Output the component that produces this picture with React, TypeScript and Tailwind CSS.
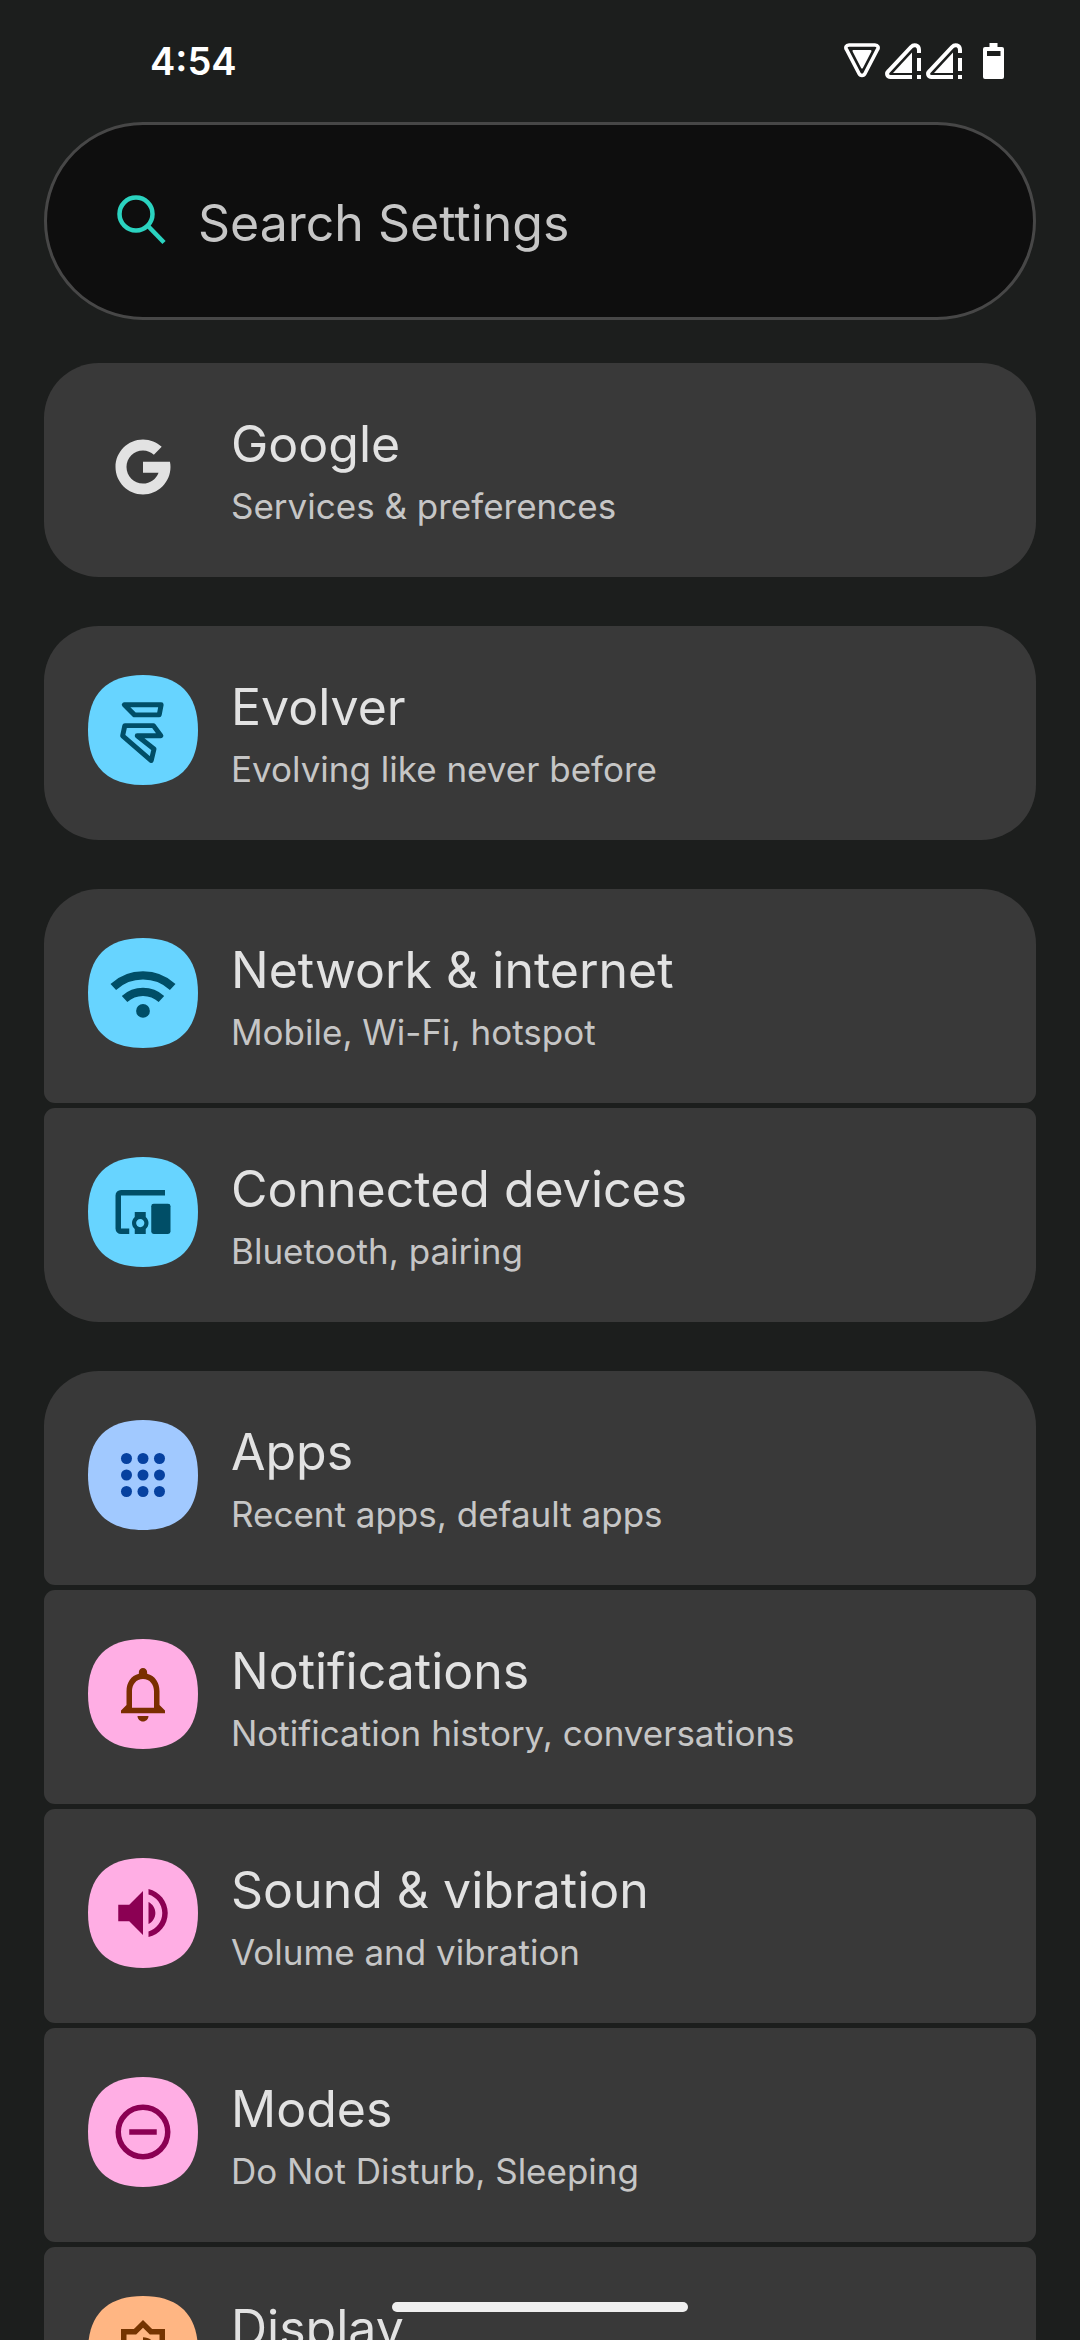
import React from "react";

interface SettingItem {
  title: string;
  summary?: string;
  tile?: string;
  color: string;
  icon: React.ReactNode;
}

const groups: SettingItem[][] = [
  [
    {
      title: "Google",
      summary: "Services & preferences",
      color: "text-[#e2e2e2]",
      icon: (
        <path
          transform="scale(0.5)"
          d="M43.6 20.1H24v8h11.3C33.7 32.7 29.2 36 24 36c-6.6 0-12-5.4-12-12s5.4-12 12-12c3.1 0 5.8 1.2 7.9 3l5.7-5.7C34 6.1 29.3 4 24 4 13 4 4 13 4 24s9 20 20 20 20-9 20-20c0-1.3-.1-2.6-.4-3.9z"
        />
      ),
    },
  ],
  [
    {
      title: "Evolver",
      summary: "Evolving like never before",
      tile: "fill-[#67d4ff]",
      color: "text-[#004e67]",
      icon: (
        <g fill="none" stroke="currentColor" strokeWidth="1.8" strokeLinejoin="round">
          <path d="M5.2 2.8H18.6L17.9 6.5H8.9Z" />
          <path d="M5.4 10.4H15.8L18.5 14.1H9.9L16 18.9L15 23.1L4.6 14.1Z" />
        </g>
      ),
    },
  ],
  [
    {
      title: "Network & internet",
      summary: "Mobile, Wi-Fi, hotspot",
      tile: "fill-[#67d4ff]",
      color: "text-[#004e67]",
      icon: (
        <>
          <g fill="none" stroke="currentColor" strokeWidth="3">
            <path d="M1.2 9.8a16 16 0 0 1 21.6 0" />
            <path d="M5.3 14.2a10 10 0 0 1 13.4 0" />
          </g>
          <circle cx="12" cy="18.5" r="2.5" />
        </>
      ),
    },
    {
      title: "Connected devices",
      summary: "Bluetooth, pairing",
      tile: "fill-[#67d4ff]",
      color: "text-[#004e67]",
      icon: (
        <>
          <path
            d="M20 5H4a1 1 0 0 0-1 1v12a1 1 0 0 0 1 1h3"
            fill="none"
            stroke="currentColor"
            strokeWidth="2"
          />
          <path d="M13 12H9v1.78c-.61.55-1 1.33-1 2.22s.39 1.67 1 2.22V20h4v-1.78c.61-.55 1-1.34 1-2.22s-.39-1.67-1-2.22V12zm-2 5.5c-.83 0-1.5-.67-1.5-1.5s.67-1.5 1.5-1.5 1.5.67 1.5 1.5-.67 1.5-1.5 1.5z" />
          <rect x="15" y="9" width="7" height="11" rx="0.9" />
        </>
      ),
    },
  ],
  [
    {
      title: "Apps",
      summary: "Recent apps, default apps",
      tile: "fill-[#a1c9ff]",
      color: "text-[#0641a0]",
      icon: [6, 12, 18].map((cy) =>
        [6, 12, 18].map((cx) => <circle key={`${cx}-${cy}`} cx={cx} cy={cy} r="2" />)
      ),
    },
    {
      title: "Notifications",
      summary: "Notification history, conversations",
      tile: "fill-[#ffaee4]",
      color: "text-[#7a2e00]",
      icon: (
        <path d="M12 22c1.1 0 2-.9 2-2h-4c0 1.1.9 2 2 2zm6-6v-5c0-3.07-1.63-5.64-4.5-6.32V4c0-.83-.67-1.5-1.5-1.5s-1.5.67-1.5 1.5v.68C7.64 5.36 6 7.92 6 11v5l-2 2v1h16v-1l-2-2zm-2 1H8v-6c0-2.48 1.51-4.5 4-4.5s4 2.02 4 4.5v6z" />
      ),
    },
    {
      title: "Sound & vibration",
      summary: "Volume and vibration",
      tile: "fill-[#ffaee4]",
      color: "text-[#8b0053]",
      icon: (
        <path d="M3 9v6h4l5 5V4L7 9H3zM16.5 12c0-1.77-1.02-3.29-2.5-4.03v8.05c1.48-.73 2.5-2.25 2.5-4.02zM14 3.23v2.06c2.89.86 5 3.54 5 6.71s-2.11 5.85-5 6.71v2.06c4.01-.91 7-4.49 7-8.77s-2.99-7.86-7-8.77z" />
      ),
    },
    {
      title: "Modes",
      summary: "Do Not Disturb, Sleeping",
      tile: "fill-[#ffaee4]",
      color: "text-[#8b0053]",
      icon: (
        <g fill="none" stroke="currentColor" strokeWidth="2">
          <circle cx="12" cy="12" r="9" />
          <path d="M7 12h10" />
        </g>
      ),
    },
    {
      title: "Display",
      tile: "fill-[#ffb683]",
      color: "text-[#753400]",
      icon: (
        <path d="M20 8.69V4h-4.69L12 .69 8.69 4H4v4.69L.69 12 4 15.31V20h4.69L12 23.31 15.31 20H20v-4.69L23.31 12 20 8.69zm-2 5.79V18h-3.52L12 20.48 9.52 18H6v-3.52L3.52 12 6 9.52V6h3.52L12 3.52 14.48 6H18v3.52L20.48 12 18 14.48zM12 7v10c2.76 0 5-2.24 5-5s-2.24-5-5-5z" />
      ),
    },
  ],
];

const SignalIcon = () => (
  <svg className="h-9 w-9" viewBox="0 0 36 36" fill="none" aria-hidden="true">
    <path
      d="M27 34H5.5C2 34 1 30.5 3.5 28L26 4C29 0.8 34 2 34 7V10"
      stroke="currentColor"
      strokeWidth="4"
    />
    <path d="M27 9.5V30H8z" fill="currentColor" />
    <path d="M34 15V28M34 32V36" stroke="currentColor" strokeWidth="4" />
  </svg>
);

const StatusBar = () => (
  <header className="flex h-[122px] items-center justify-between pl-[150px] pr-[76px] text-white">
    <span className="text-[38px] font-semibold leading-[48px]">4:54</span>
    <div className="flex items-center gap-[5px]">
      <svg className="h-9 w-9" viewBox="0 0 36 36" aria-hidden="true">
        <path
          d="M5 2H31C34 2 34.8 4.5 33.5 6.5L21 30.5C19.8 33 16.2 33 15 30.5L2.5 6.5C1.2 4.5 2 2 5 2Z"
          fill="none"
          stroke="currentColor"
          strokeWidth="3.6"
        />
        <path
          d="M9.5 8H26.5L18 24.5Z"
          fill="currentColor"
          stroke="currentColor"
          strokeWidth="2"
          strokeLinejoin="round"
        />
      </svg>
      <SignalIcon />
      <SignalIcon />
      <svg className="ml-4 h-9 w-[21px]" viewBox="0 0 21 36" aria-hidden="true">
        <path
          fill="currentColor"
          fillRule="evenodd"
          d="M6.5 0h8v4H19a2 2 0 0 1 2 2v28a2 2 0 0 1-2 2H2a2 2 0 0 1-2-2V6a2 2 0 0 1 2-2h4.5zM4 8v5h13.5V8z"
        />
      </svg>
    </div>
  </header>
);

const SearchBar = () => (
  <label className="flex h-[198px] items-center rounded-full border-[3px] border-[#474747] bg-[#0e0e0e] pl-[69px] pr-11">
    <svg className="h-[54px] w-[54px] shrink-0 text-[#2bd3c0]" viewBox="0 0 54 54" aria-hidden="true">
      <g fill="none" stroke="currentColor" strokeWidth="4.5">
        <circle cx="20" cy="20" r="16.5" />
        <path d="M32 32L48 48.5" />
      </g>
    </svg>
    <input
      type="search"
      aria-label="Search Settings"
      placeholder="Search Settings"
      className="ml-7 min-w-0 flex-1 bg-transparent pt-1 text-[50px] leading-[64px] text-[#e2e2e2] outline-none placeholder:text-[#c6c6c6]"
    />
  </label>
);

const SettingRow = ({ item }: { item: SettingItem }) => (
  <li className="overflow-hidden rounded-[11px] bg-[#393939] first:rounded-t-[55px] last:rounded-b-[55px]">
    <a href="#" className="flex items-start gap-[33px] px-11 pb-[46px] pt-[49px]">
      <svg className={`h-[110px] w-[110px] shrink-0 ${item.color}`} viewBox="0 0 110 110" aria-hidden="true">
        {item.tile && (
          <path className={item.tile} d="M55 0C19 0 0 19 0 55s19 55 55 55 55-19 55-55S91 0 55 0z" />
        )}
        <g transform="translate(22 22) scale(2.75)" fill="currentColor">
          {item.icon}
        </g>
      </svg>
      <div className="flex min-w-0 flex-col gap-[5px]">
        <h2 className="text-[50px] leading-[64px] text-[#e2e2e2]">{item.title}</h2>
        {item.summary && (
          <p className="text-[35px] leading-[50px] text-[#c6c6c6]">{item.summary}</p>
        )}
      </div>
    </a>
  </li>
);

export default function App() {
  return (
    <div className="relative h-screen overflow-hidden bg-[#1c1e1d] font-['Inter',sans-serif]">
      <StatusBar />
      <main className="px-11">
        <SearchBar />
        <div className="mt-[43px] flex flex-col gap-[49px]">
          {groups.map((group) => (
            <ul key={group[0].title} className="flex flex-col gap-[5px]">
              {group.map((item) => (
                <SettingRow key={item.title} item={item} />
              ))}
            </ul>
          ))}
        </div>
      </main>
      <div className="absolute bottom-7 left-1/2 h-[10px] w-[296px] -translate-x-1/2 rounded-full bg-[#efefef]" />
    </div>
  );
}
